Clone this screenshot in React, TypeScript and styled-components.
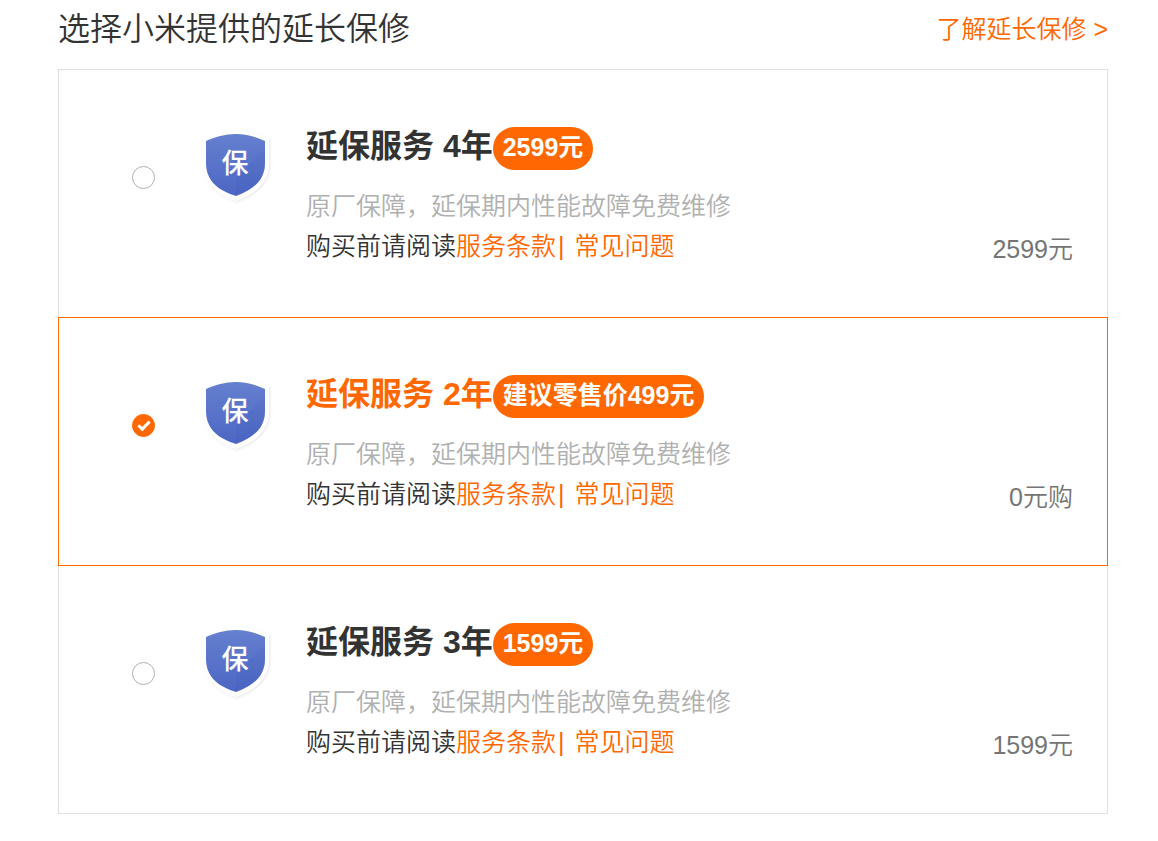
import React, { useState } from "react";
import styled, { createGlobalStyle } from "styled-components";

const orange = "#ff6700";

const GlobalStyle = createGlobalStyle`
  *, *::before, *::after { box-sizing: border-box; }
  body {
    margin: 0;
    background: #fff;
    color: #333;
    font-family: "Liberation Sans", "Noto Sans CJK SC", sans-serif;
    font-size: 25px;
    font-weight: 350;
    line-height: 40px;
  }
`;

const Page = styled.main`
  padding: 9px 50px 28px 58px;
`;

const Header = styled.header`
  display: flex;
  justify-content: space-between;
  align-items: center;
  margin-bottom: 20px;
`;

const Heading = styled.h1`
  margin: 0;
  font-size: 32px;
  font-weight: 350;
  line-height: 40px;
`;

const Link = styled.a`
  color: ${orange};
  text-decoration: none;
`;

const List = styled.ul`
  margin: 0;
  padding: 0;
  list-style: none;
`;

const Row = styled.li<{ $selected: boolean }>`
  position: relative;
  z-index: ${(p) => (p.$selected ? 1 : 0)};
  border: 1px solid ${(p) => (p.$selected ? orange : "#e0e0e0")};

  & + & {
    margin-top: -1px;
  }
`;

const Option = styled.label`
  display: flex;
  align-items: flex-start;
  padding: 57px 34px 48px 73px;
  cursor: pointer;
`;

const Radio = styled.input`
  appearance: none;
  display: grid;
  place-items: center;
  flex: none;
  width: 23px;
  height: 23px;
  margin: 39px 44px 0 0;
  border: 1px solid #b0b0b0;
  border-radius: 50%;
  background: #fff;

  &:checked {
    border-color: ${orange};
    background: ${orange};
  }

  &:checked::after {
    content: "";
    width: 12px;
    height: 7px;
    margin-bottom: 3px;
    border: solid #fff;
    border-width: 0 0 3px 3px;
    transform: rotate(-45deg);
  }
`;

const ShieldIcon = styled.svg`
  flex: none;
  width: 80px;
  height: 80px;
  margin-right: 27px;
`;

const Info = styled.div`
  flex: 1;
  min-width: 0;
  padding-bottom: 3px;
`;

const TitleLine = styled.div`
  display: flex;
  align-items: flex-start;
  margin-bottom: 16px;
`;

const Title = styled.h2<{ $selected: boolean }>`
  margin: 0;
  color: ${(p) => (p.$selected ? orange : "#333")};
  font-size: 32px;
  font-weight: 700;
  line-height: 38px;
`;

const Badge = styled.span`
  padding: 0 10px 3px;
  border-radius: 22px;
  background: ${orange};
  color: #fff;
  font-weight: 700;
`;

const Description = styled.p`
  margin: 0;
  color: #b0b0b0;
`;

const Terms = styled.p`
  margin: 0;
`;

const Divider = styled.span`
  margin: 0 10px 0 2px;
  color: ${orange};
`;

const Price = styled.span`
  align-self: flex-end;
  color: #757575;
`;

const plans = [
  { id: "y4", title: "延保服务 4年", badge: "2599元", price: "2599元" },
  { id: "y2", title: "延保服务 2年", badge: "建议零售价499元", price: "0元购" },
  { id: "y3", title: "延保服务 3年", badge: "1599元", price: "1599元" },
];

function Shield({ id }: { id: string }) {
  return (
    <ShieldIcon viewBox="0 0 80 80" aria-hidden="true">
      <defs>
        <linearGradient id={`${id}-fill`} x1="0" y1="0" x2="0" y2="1">
          <stop offset="0" stopColor="#6580ce" />
          <stop offset="1" stopColor="#4c67c4" />
        </linearGradient>
        <filter id={`${id}-shadow`} x="-20%" y="-20%" width="140%" height="140%">
          <feDropShadow dx="1" dy="1" stdDeviation="1" floodColor="#8a9484" floodOpacity="0.22" />
        </filter>
      </defs>
      <path
        d="M37 3C27 4 15 7 4 11V36C4 55 17 67 37 74C57 67 70 55 70 36V11C59 7 47 4 37 3Z"
        fill="#fff"
        filter={`url(#${id}-shadow)`}
      />
      <path
        d="M37 7C26 7 16 10 7 14V36C7 52 17 63 37 69C56 62 66 52 66 36V14C57 10 48 7 37 7Z"
        fill={`url(#${id}-fill)`}
      />
      <path d="M37 50L66 22V36C66 52 56 62 37 69Z" fill="#3e58b8" opacity="0.15" />
      <text
        x="36"
        y="46"
        textAnchor="middle"
        fill="#fff"
        fontSize="27"
        fontWeight="500"
        fontFamily='"Noto Sans CJK SC", sans-serif'
      >
        保
      </text>
    </ShieldIcon>
  );
}

export default function App() {
  const [selected, setSelected] = useState("y2");

  return (
    <>
      <GlobalStyle />
      <Page>
        <Header>
          <Heading>选择小米提供的延长保修</Heading>
          <Link href="#warranty">了解延长保修 &gt;</Link>
        </Header>
        <List>
          {plans.map((plan) => (
            <Row key={plan.id} $selected={selected === plan.id}>
              <Option>
                <Radio
                  type="radio"
                  name="warranty"
                  checked={selected === plan.id}
                  onChange={() => setSelected(plan.id)}
                />
                <Shield id={plan.id} />
                <Info>
                  <TitleLine>
                    <Title $selected={selected === plan.id}>{plan.title}</Title>
                    <Badge>{plan.badge}</Badge>
                  </TitleLine>
                  <Description>原厂保障，延保期内性能故障免费维修</Description>
                  <Terms>
                    购买前请阅读
                    <Link href="#terms">服务条款</Link>
                    <Divider>|</Divider>
                    <Link href="#faq">常见问题</Link>
                  </Terms>
                </Info>
                <Price>{plan.price}</Price>
              </Option>
            </Row>
          ))}
        </List>
      </Page>
    </>
  );
}
